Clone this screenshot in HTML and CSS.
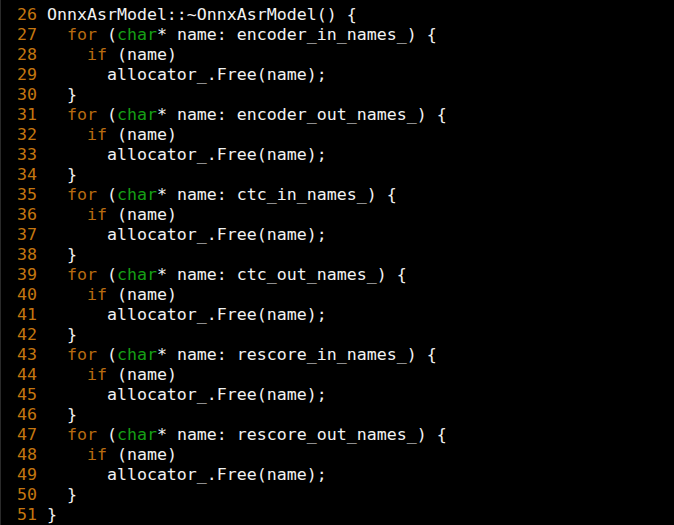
FILE: index.html
```html
<!DOCTYPE html>
<html>
<head>
<meta charset="utf-8">
<link rel="stylesheet" href="styles.css">
</head>
<body>
<div class="term">
<div class="code">
<div class="ln"><span class="n">25 </span></div>
<div class="ln"><span class="n">26 </span>OnnxAsrModel::~OnnxAsrModel() {</div>
<div class="ln"><span class="n">27 </span>  <span class="k">for</span> (<span class="t">char</span>* name: encoder_in_names_) {</div>
<div class="ln"><span class="n">28 </span>    <span class="k">if</span> (name)</div>
<div class="ln"><span class="n">29 </span>      allocator_.Free(name);</div>
<div class="ln"><span class="n">30 </span>  }</div>
<div class="ln"><span class="n">31 </span>  <span class="k">for</span> (<span class="t">char</span>* name: encoder_out_names_) {</div>
<div class="ln"><span class="n">32 </span>    <span class="k">if</span> (name)</div>
<div class="ln"><span class="n">33 </span>      allocator_.Free(name);</div>
<div class="ln"><span class="n">34 </span>  }</div>
<div class="ln"><span class="n">35 </span>  <span class="k">for</span> (<span class="t">char</span>* name: ctc_in_names_) {</div>
<div class="ln"><span class="n">36 </span>    <span class="k">if</span> (name)</div>
<div class="ln"><span class="n">37 </span>      allocator_.Free(name);</div>
<div class="ln"><span class="n">38 </span>  }</div>
<div class="ln"><span class="n">39 </span>  <span class="k">for</span> (<span class="t">char</span>* name: ctc_out_names_) {</div>
<div class="ln"><span class="n">40 </span>    <span class="k">if</span> (name)</div>
<div class="ln"><span class="n">41 </span>      allocator_.Free(name);</div>
<div class="ln"><span class="n">42 </span>  }</div>
<div class="ln"><span class="n">43 </span>  <span class="k">for</span> (<span class="t">char</span>* name: rescore_in_names_) {</div>
<div class="ln"><span class="n">44 </span>    <span class="k">if</span> (name)</div>
<div class="ln"><span class="n">45 </span>      allocator_.Free(name);</div>
<div class="ln"><span class="n">46 </span>  }</div>
<div class="ln"><span class="n">47 </span>  <span class="k">for</span> (<span class="t">char</span>* name: rescore_out_names_) {</div>
<div class="ln"><span class="n">48 </span>    <span class="k">if</span> (name)</div>
<div class="ln"><span class="n">49 </span>      allocator_.Free(name);</div>
<div class="ln"><span class="n">50 </span>  }</div>
<div class="ln"><span class="n">51 </span>}</div>
</div>
</div>
</body>
</html>
```

FILE: styles.css
```css
html, body {
  margin: 0;
  padding: 0;
  background: #000;
}
.term {
  width: 674px;
  height: 525px;
  overflow: hidden;
  display: flex;
  flex-direction: column;
  justify-content: flex-end;
  background: #000;
  box-sizing: border-box;
  border-left: 1px solid #2a2a2a;
}
.code {
  flex-shrink: 0;
  padding: 0 0 0 16px;
  font-family: "DejaVu Sans Mono", monospace;
  font-size: 16.6px;
  line-height: 20px;
  color: #f2f2f2;
}
.ln {
  height: 20px;
  white-space: pre;
}
.n { color: #c4760f; }
.k { color: #b86c10; }
.t { color: #16a016; }
```
